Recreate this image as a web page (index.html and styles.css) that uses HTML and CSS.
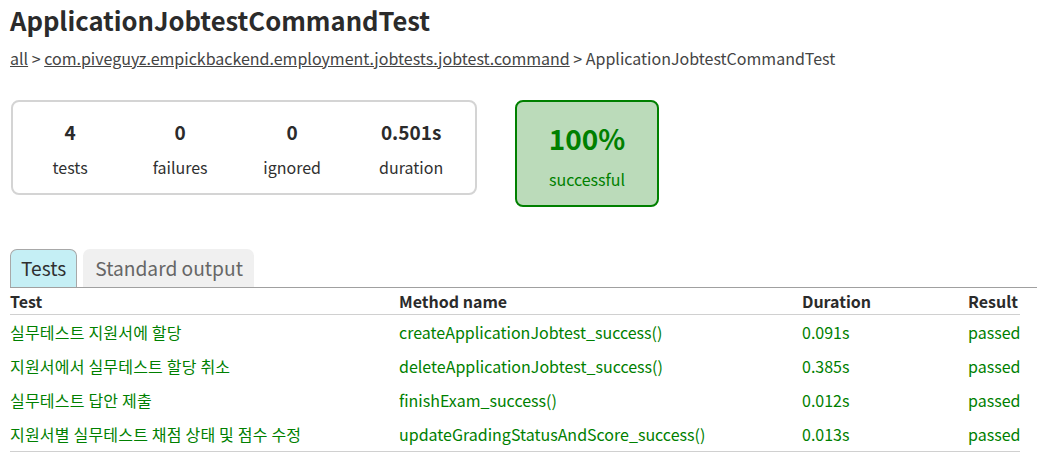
FILE: index.html
```html
<!DOCTYPE html>
<html>
<head>
<meta charset="utf-8">
<link rel="stylesheet" href="styles.css">
</head>
<body>
<div class="content">
  <h1 class="title">ApplicationJobtestCommandTest</h1>
  <div class="breadcrumbs"><a href="#">all</a> &gt; <a href="#">com.piveguyz.empickbackend.employment.jobtests.jobtest.command</a> &gt; ApplicationJobtestCommandTest</div>
  <div class="summary">
    <div class="counters">
      <div class="counter"><div class="num">4</div><div class="lbl">tests</div></div>
      <div class="counter"><div class="num">0</div><div class="lbl">failures</div></div>
      <div class="counter"><div class="num">0</div><div class="lbl">ignored</div></div>
      <div class="counter"><div class="num">0.501s</div><div class="lbl">duration</div></div>
    </div>
    <div class="success">
      <div class="pct">100%</div>
      <div class="succ">successful</div>
    </div>
  </div>
  <div class="tabs">
    <div class="tab selected">Tests</div>
    <div class="tab">Standard output</div>
  </div>
  <table class="results">
    <thead>
      <tr><th class="c1">Test</th><th class="c2">Method name</th><th class="c3">Duration</th><th class="c4">Result</th></tr>
    </thead>
    <tbody>
      <tr><td class="name">실무테스트 지원서에 할당</td><td>createApplicationJobtest_success()</td><td>0.091s</td><td>passed</td></tr>
      <tr><td class="name">지원서에서 실무테스트 할당 취소</td><td>deleteApplicationJobtest_success()</td><td>0.385s</td><td>passed</td></tr>
      <tr><td class="name">실무테스트 답안 제출</td><td>finishExam_success()</td><td>0.012s</td><td>passed</td></tr>
      <tr><td class="name">지원서별 실무테스트 채점 상태 및 점수 수정</td><td>updateGradingStatusAndScore_success()</td><td>0.013s</td><td>passed</td></tr>
    </tbody>
  </table>
</div>
</body>
</html>
```

FILE: styles.css
```css
html, body {
  margin: 0;
  padding: 0;
  background: #ffffff;
}

body {
  font-family: "Noto Sans CJK KR", "Noto Sans", sans-serif;
  color: #303030;
  font-size: 16px;
}

.content {
  padding: 0 10px;
}

.title {
  margin: 0;
  padding-top: 2px;
  font-size: 25.6px;
  font-weight: 700;
  line-height: 36px;
  color: #2b2b2b;
  white-space: nowrap;
}

.breadcrumbs {
  margin-top: 8px;
  font-size: 16px;
  line-height: 24px;
  color: #444;
  white-space: nowrap;
}

.breadcrumbs a {
  color: #444;
  text-decoration: underline;
}

.summary {
  display: flex;
  align-items: flex-start;
  margin-top: 30px;
  padding-left: 1px;
  gap: 38px;
}

.counters {
  box-sizing: border-box;
  width: 466px;
  height: 95px;
  border: 2px solid #d4d4d4;
  border-radius: 8px;
  display: flex;
  padding: 0 0 0 4px;
}

.counter {
  text-align: center;
  padding-top: 17px;
}

.counter:nth-child(1) { width: 108px; }
.counter:nth-child(2) { width: 116px; }
.counter:nth-child(3) { width: 112px; }
.counter:nth-child(4) { width: 130px; }

.num {
  font-size: 19px;
  font-weight: 700;
  line-height: 26px;
  color: #2b2b2b;
}

.lbl {
  margin-top: 10px;
  font-size: 16px;
  line-height: 24px;
  color: #303030;
}

.success {
  box-sizing: border-box;
  width: 144px;
  height: 107px;
  background: #bbdbba;
  border: 2px solid #008000;
  border-radius: 8px;
  text-align: center;
  color: #008000;
  padding-top: 18px;
}

.pct {
  font-size: 28px;
  font-weight: 700;
  line-height: 36px;
}

.succ {
  margin-top: 11px;
  font-size: 16px;
  line-height: 24px;
}

.tabs {
  display: flex;
  align-items: flex-end;
  gap: 6px;
  margin-top: 42px;
  border-bottom: 1px solid #a0a0a0;
  height: 38px;
}

.tab {
  box-sizing: border-box;
  height: 38px;
  padding: 0 11px 0 12px;
  font-size: 19.2px;
  line-height: 39px;
  border-radius: 7px 7px 0 0;
  background: #f0f0f0;
  color: #666;
  white-space: nowrap;
}

.tab.selected {
  background: #c5eff5;
  border: 1px solid #a8a8a8;
  border-bottom: none;
  color: #303030;
  padding: 0 10px;
  line-height: 37px;
}

.results {
  border-collapse: collapse;
  border-bottom: 1px solid #d0d0d0;
}

.results th {
  text-align: left;
  font-weight: 700;
  font-size: 16px;
  line-height: 26px;
  padding: 0;
  border-bottom: 1px solid #d0d0d0;
  white-space: nowrap;
  color: #2b2b2b;
}

.results th.c1 { width: 389px; }
.results th.c2 { width: 403px; }
.results th.c3 { width: 166px; }
.results th.c4 { width: 52px; }

.results td {
  padding: 5px 0;
  font-size: 16px;
  line-height: 24px;
  color: #008000;
  white-space: nowrap;
}

.results td.name {
  letter-spacing: 0.2px;
}
```
